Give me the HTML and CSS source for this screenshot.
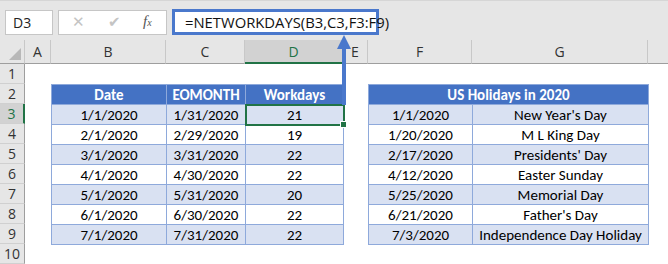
FILE: index.html
```html
<!DOCTYPE html>
<html lang="en">
<head>
  <meta charset="UTF-8">
  <title>NETWORKDAYS</title>
  <link rel="stylesheet" href="styles.css">
</head>
<body>

  <div class="app">

    <!-- Formula bar -->
    <div class="toolbar">
      <div class="namebox">D3</div>
      <div class="fxbox">
        <span class="btn cancel">&#x2715;</span>
        <span class="btn enter">&#x2714;</span>
        <span class="fx"><i>f</i><small>x</small></span>
      </div>
      <div class="formula">=NETWORKDAYS(B3,C3,F3:F9)</div>
    </div>

    <!-- Sheet -->
    <div class="sheet">
      <div class="corner"></div>
      <div class="colhead">A</div>
      <div class="colhead">B</div>
      <div class="colhead">C</div>
      <div class="colhead active">D</div>
      <div class="colhead">E</div>
      <div class="colhead">F</div>
      <div class="colhead">G</div>
      <div class="colhead last"></div>

      <div class="rowhead">1</div>
      <div class="rowhead">2</div>
      <div class="rowhead active">3</div>
      <div class="rowhead">4</div>
      <div class="rowhead">5</div>
      <div class="rowhead">6</div>
      <div class="rowhead">7</div>
      <div class="rowhead">8</div>
      <div class="rowhead">9</div>
      <div class="rowhead">10</div>

      <table class="xtable work">
        <colgroup><col class="c-b"><col class="c-c"><col class="c-d"></colgroup>
        <tr class="head"><td>Date</td><td>EOMONTH</td><td>Workdays</td></tr>
        <tr class="band"><td>1/1/2020</td><td>1/31/2020</td><td class="sel">21</td></tr>
        <tr><td>2/1/2020</td><td>2/29/2020</td><td>19</td></tr>
        <tr class="band"><td>3/1/2020</td><td>3/31/2020</td><td>22</td></tr>
        <tr><td>4/1/2020</td><td>4/30/2020</td><td>22</td></tr>
        <tr class="band"><td>5/1/2020</td><td>5/31/2020</td><td>20</td></tr>
        <tr><td>6/1/2020</td><td>6/30/2020</td><td>22</td></tr>
        <tr class="band"><td>7/1/2020</td><td>7/31/2020</td><td>22</td></tr>
      </table>

      <table class="xtable hol">
        <colgroup><col class="c-f"><col class="c-g"></colgroup>
        <tr class="head"><td colspan="2">US Holidays in 2020</td></tr>
        <tr class="band"><td>1/1/2020</td><td>New Year's Day</td></tr>
        <tr><td>1/20/2020</td><td>M L King Day</td></tr>
        <tr class="band"><td>2/17/2020</td><td>Presidents' Day</td></tr>
        <tr><td>4/12/2020</td><td>Easter Sunday</td></tr>
        <tr class="band"><td>5/25/2020</td><td>Memorial Day</td></tr>
        <tr><td>6/21/2020</td><td>Father's Day</td></tr>
        <tr class="band"><td>7/3/2020</td><td>Independence Day Holiday</td></tr>
      </table>
    </div>

    <!-- arrow from D3 up to the formula -->
    <svg class="arrow" width="16" height="72" viewBox="0 0 16 72">
      <polygon points="8,0 15,14 1,14" fill="#4a78cc"/>
      <rect x="6" y="12" width="4" height="58" fill="#4a78cc"/>
    </svg>
  </div>

</body>
</html>
```

FILE: styles.css
```css
body {
  margin: 0;
  background: #fff;
}

.app {
  position: relative;
  width: 668px;
  height: 264px;
  overflow: hidden;
}

/* formula bar */
.toolbar {
  height: 40px;
  background: #e6e6e6;
  display: flex;
  align-items: flex-start;
  padding: 9px 0 0 5px;
  box-sizing: border-box;
  border-top: 1px solid #d6d6d6;
}

.namebox {
  width: 48px;
  height: 25px;
  box-sizing: border-box;
  background: #fff;
  border: 1px solid #c6c6c6;
  font: 14px "Open Sans", sans-serif;
  color: #222;
  padding: 2px 0 0 7px;
}

.fxbox {
  width: 109px;
  height: 25px;
  margin-left: 5px;
  box-sizing: border-box;
  background: #fff;
  border: 1px solid #c6c6c6;
  position: relative;
  color: #c4c4c4;
}

.fxbox .btn {
  font: 15px "DejaVu Sans", sans-serif;
  position: absolute;
  top: 2px;
}

.fxbox .cancel { left: 13px; }
.fxbox .enter { left: 49px; }

.fxbox .fx {
  position: absolute;
  left: 84px;
  top: 2px;
  color: #555;
  font: italic 15px "Liberation Serif", serif;
}

.fxbox .fx small {
  font-size: 10px;
}

.formula {
  margin-left: 5px;
  margin-top: -1px;
  width: 207px;
  height: 26px;
  box-sizing: border-box;
  background: #fff;
  border: 3px solid #4a78cc;
  font: 14.8px "Open Sans", sans-serif;
  color: #111;
  padding: 0 0 0 10px;
  line-height: 20px;
  white-space: nowrap;
}

/* grid */
.sheet {
  display: grid;
  grid-template-columns: 25px 26px 115px 79px 98px 25px 104px 176px 20px;
  grid-template-rows: 24px repeat(10, 20px);
}

.corner {
  background: #e6e6e6;
  border-right: 1px solid #c8c8c8;
  border-bottom: 1px solid #9e9e9e;
  position: relative;
}

.corner::after {
  content: "";
  position: absolute;
  right: 3px;
  bottom: 3px;
  border-left: 12px solid transparent;
  border-bottom: 12px solid #b8b8b8;
}

.colhead {
  background: #e6e6e6;
  border-right: 1px solid #c8c8c8;
  border-bottom: 1px solid #9e9e9e;
  font: 14px "Open Sans", sans-serif;
  color: #333;
  text-align: center;
  line-height: 24px;
}

.colhead.active {
  background: #d2d2d2;
  color: #217346;
  border-bottom: 2px solid #217346;
}

.colhead.last {
  border-right: none;
}

.rowhead {
  grid-column: 1;
  background: #e6e6e6;
  border-right: 1px solid #9e9e9e;
  border-bottom: 1px solid #d0d0d0;
  font: 14px "Open Sans", sans-serif;
  color: #333;
  text-align: center;
  line-height: 20px;
}

.rowhead.active {
  background: #d2d2d2;
  color: #217346;
  border-right: 2px solid #217346;
}

/* tables */
.xtable {
  grid-row: 3 / 11;
  border-collapse: collapse;
  table-layout: fixed;
  width: 100%;
  font: 15px Calibri, Carlito, Lato, sans-serif;
  color: #000;
}

.xtable.work {
  grid-column: 3 / 6;
}

.xtable.hol {
  grid-column: 7 / 9;
}

.c-b { width: 115px; }
.c-c { width: 79px; }
.c-d { width: 98px; }
.c-f { width: 104px; }
.c-g { width: 176px; }

.xtable td {
  border: 1px solid #8ea9db;
  height: 19px;
  padding: 0;
  text-align: center;
  line-height: 18px;
  white-space: nowrap;
  overflow: hidden;
}

.xtable .head td {
  background: #4472c4;
  color: #fff;
  font-weight: bold;
}

.xtable .band td {
  background: #d9e1f2;
}

.xtable td.sel {
  outline: 2px solid #217346;
  outline-offset: -1px;
  position: relative;
  overflow: visible;
}

.xtable td.sel::after {
  content: "";
  position: absolute;
  right: -4px;
  bottom: -4px;
  width: 5px;
  height: 5px;
  background: #217346;
  border: 1px solid #fff;
}

.arrow {
  position: absolute;
  left: 336px;
  top: 35px;
}
```
